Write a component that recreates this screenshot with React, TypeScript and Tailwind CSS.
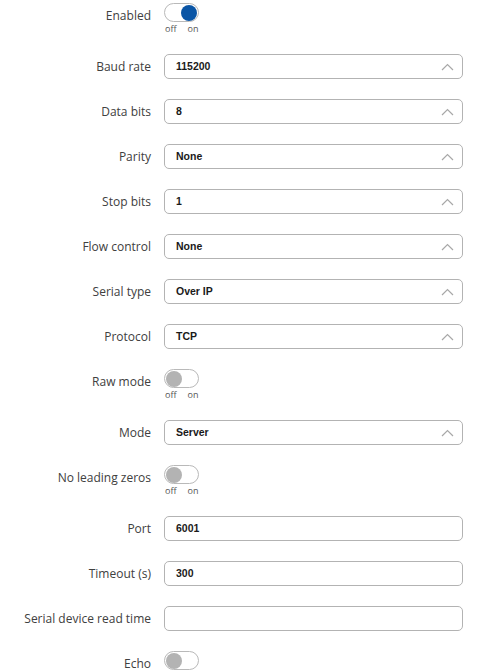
import { useState } from "react"

type Field =
    | { kind: "toggle"; label: string; on: boolean }
    | { kind: "select"; label: string; value: string }
    | { kind: "input"; label: string; value: string }

const fields: Field[] = [
    { kind: "toggle", label: "Enabled", on: true },
    { kind: "select", label: "Baud rate", value: "115200" },
    { kind: "select", label: "Data bits", value: "8" },
    { kind: "select", label: "Parity", value: "None" },
    { kind: "select", label: "Stop bits", value: "1" },
    { kind: "select", label: "Flow control", value: "None" },
    { kind: "select", label: "Serial type", value: "Over IP" },
    { kind: "select", label: "Protocol", value: "TCP" },
    { kind: "toggle", label: "Raw mode", on: false },
    { kind: "select", label: "Mode", value: "Server" },
    { kind: "toggle", label: "No leading zeros", on: false },
    { kind: "input", label: "Port", value: "6001" },
    { kind: "input", label: "Timeout (s)", value: "300" },
    { kind: "input", label: "Serial device read time", value: "" },
    { kind: "toggle", label: "Echo", on: false },
]

function Toggle({ initial }: { initial: boolean }) {
    const [on, setOn] = useState(initial)
    return (
        <div className="flex flex-col">
            <button
                type="button"
                onClick={() => setOn(!on)}
                className={`w-[35px] h-[19px] rounded-full border border-[#b9b9b9] bg-white flex items-center px-[1px] ${on ? "justify-end" : "justify-start"}`}
            >
                <span className={`w-[16px] h-[16px] rounded-full ${on ? "bg-[#0a55a5]" : "bg-[#b3b3b3]"}`} />
            </button>
            <div className="flex gap-[11px] text-[9px] leading-[12px] text-[#555] pl-[1px] pt-[1px]">
                <span>off</span>
                <span>on</span>
            </div>
        </div>
    )
}

export default function App() {
    return (
        <div className="w-[482px] bg-white pt-[3px] flex flex-col gap-[20px]" style={{ fontFamily: '"Open Sans", sans-serif' }}>
            {fields.map((f) => (
                <div key={f.label} className={`flex ${f.kind === "toggle" ? "items-start h-[31px]" : "items-center h-[25px]"}`}>
                    <label className={`w-[152px] text-right text-[12px] text-[#404040] pr-[1px] ${f.kind === "toggle" ? "leading-[19px] pt-[3px]" : "pt-[1px]"}`}>
                        {f.label}
                    </label>
                    <div className="ml-[12px] w-[299px]">
                        {f.kind === "toggle" && <Toggle initial={f.on} />}
                        {f.kind !== "toggle" && (
                            <div className="h-[25px] border border-[#b3b3b3] rounded-[5px] flex items-center justify-between pl-[11px] pr-[8px]">
                                <span className="text-[10.5px] font-semibold text-[#1a1a1a]" style={{ fontFamily: '"Liberation Sans", Arial, sans-serif' }}>
                                    {f.value}
                                </span>
                                {f.kind === "select" && (
                                    <svg width="13" height="8" viewBox="0 0 13 8" fill="none">
                                        <path d="M1 7 L6.5 1.5 L12 7" stroke="#a8a8a8" strokeWidth="1.2" />
                                    </svg>
                                )}
                            </div>
                        )}
                    </div>
                </div>
            ))}
        </div>
    )
}
